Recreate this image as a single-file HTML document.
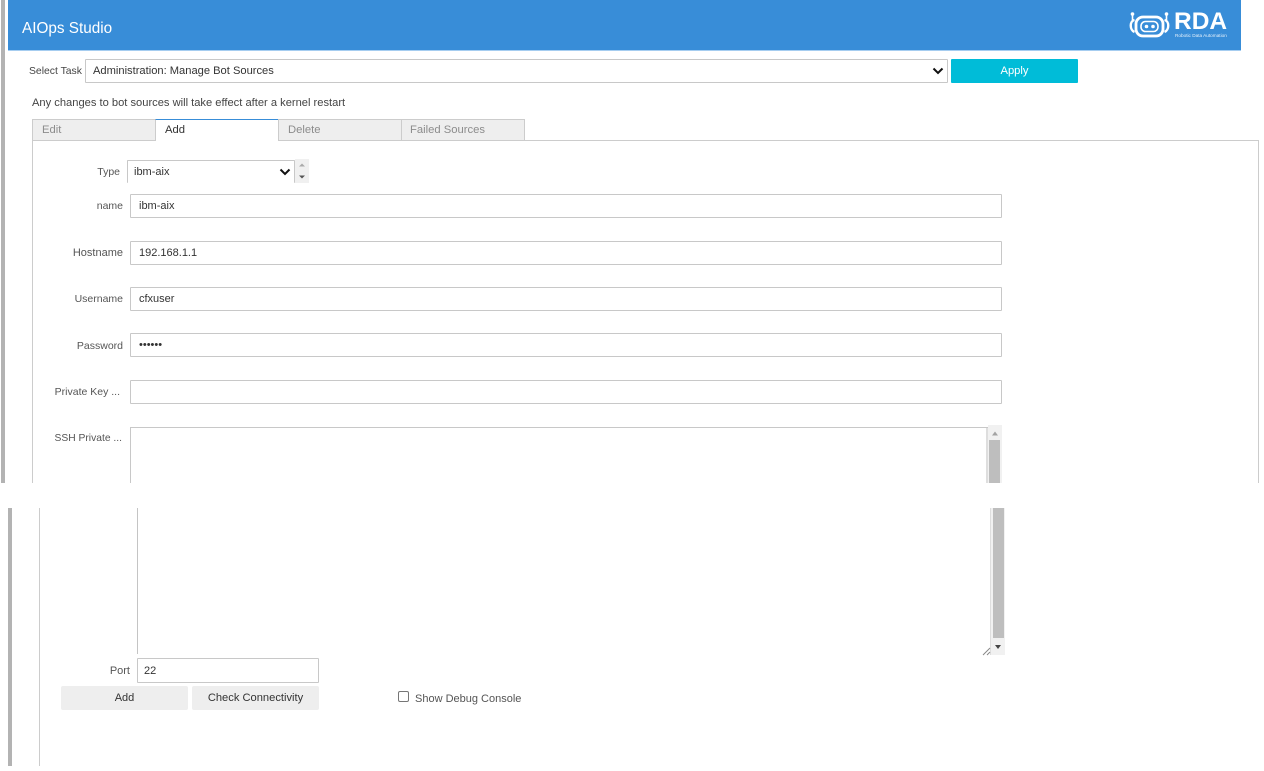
<!DOCTYPE html>
<html lang="en"><head><meta charset="utf-8"><title>AIOps Studio</title>
<style>
html,body{margin:0;padding:0;background:#fff;}
body{width:1264px;height:771px;overflow:hidden;position:relative;font-family:"Liberation Sans",Arial,sans-serif;font-size:12px;color:#333;}
.a{position:absolute;box-sizing:border-box;}
.t{position:absolute;white-space:nowrap;line-height:16px;height:16px;}
.r{text-align:right;color:#555;font-size:10.500px;}
.i{position:absolute;box-sizing:border-box;border:1px solid #c8c8c8;background:#fff;border-radius:1px;color:#333;line-height:23px;padding-left:8px;white-space:nowrap;font-size:11px;}
.tab{position:absolute;box-sizing:border-box;top:119px;height:22px;background:#eee;border:1px solid #ccc;color:#8c8c8c;line-height:20px;padding-left:9px;font-size:11.250px;}
</style></head><body>
<div class="a" style="left:1px;top:0;width:4px;height:483px;background:#b3b3b3"></div>
<div class="a" style="left:8px;top:508px;width:4px;height:258px;background:#b3b3b3"></div>
<div class="a" style="left:8px;top:0;width:1233px;height:50px;background:#388dd8"></div>
<div class="a" style="left:8px;top:50px;width:1233px;height:1px;background:#a6cdf0"></div>
<div class="t" style="left:22px;top:20px;font-size:15.300px;line-height:18px;height:18px;color:#fff;">AIOps Studio</div>
<svg class="a" style="left:1129px;top:11px" width="42" height="30" viewBox="0 0 42 30" fill="none" stroke="#fff">
<rect x="7" y="6" width="27" height="19" rx="7" stroke-width="2.800"/>
<rect x="12" y="10.500" width="17" height="10" rx="4.500" stroke-width="1.600"/>
<circle cx="17.500" cy="15.500" r="1.800" fill="#fff" stroke="none"/><circle cx="24" cy="15.500" r="1.800" fill="#fff" stroke="none"/>
<path d="M5.500 9C0.500 10 0.500 19 5.500 21M35.500 9C40.500 10 40.500 19 35.500 21" stroke-width="2.400"/>
<path d="M3.500 9V4M37.500 9V4" stroke-width="1.600"/><circle cx="3.500" cy="3" r="1.800" fill="#fff" stroke="none"/><circle cx="37.500" cy="3" r="1.800" fill="#fff" stroke="none"/>
</svg>
<div class="t" style="left:1174px;top:9px;font-size:24.500px;line-height:26px;height:26px;font-weight:bold;color:#fff;">RDA</div>
<div class="t" style="left:1175px;top:32px;font-size:4.700px;line-height:7px;height:7px;color:#e6f1fb;">Robotic Data Automation</div>

<div class="t" style="left:29px;top:64px;font-size:10.400px;color:#444;">Select Task</div>
<div class="i" style="left:85px;top:59px;width:863px;height:24px;padding-left:7px;font-size:11.150px;">Administration: Manage Bot Sources</div>
<svg class="a" style="left:932px;top:67px" width="12" height="8" viewBox="0 0 12 8"><path d="M1.500 1.500L6 6L10.500 1.500" fill="none" stroke="#111" stroke-width="2"/></svg>
<div class="a" style="left:951px;top:59px;width:127px;height:24px;background:#00bcd8;border-radius:1px;color:#fff;text-align:center;line-height:25px;font-size:11.200px;">Apply</div>
<div class="t" style="left:32px;top:95px;font-size:11.150px;color:#444;">Any changes to bot sources will take effect after a kernel restart</div>

<div class="a" style="left:32px;top:140px;width:1226px;height:1px;background:#ccc"></div>
<div class="a" style="left:1258px;top:140px;width:1px;height:343px;background:#ccc"></div>
<div class="a" style="left:32px;top:140px;width:1px;height:343px;background:#ccc"></div>
<div class="a" style="left:39px;top:508px;width:1px;height:258px;background:#ccc"></div>
<div class="tab" style="left:32px;width:124px;">Edit</div>
<div class="tab" style="left:155px;width:124px;height:22px;background:#fff;border:0;border-top:1px solid #388dd8;border-right:1px solid #ccc;border-left:1px solid #ccc;color:#333;padding-left:9px;">Add</div>
<div class="tab" style="left:278px;width:124px;">Delete</div>
<div class="tab" style="left:401px;width:124px;padding-left:8px;">Failed Sources</div>

<div class="t r" style="left:60px;top:164px;width:60px;">Type</div>
<div class="i" style="left:127px;top:160px;width:168px;height:23px;padding-left:6px;border-bottom:0;">ibm-aix</div>
<svg class="a" style="left:279px;top:168px" width="12" height="8" viewBox="0 0 12 8"><path d="M1.500 1.500L6 6L10.500 1.500" fill="none" stroke="#111" stroke-width="2"/></svg>
<div class="a" style="left:295px;top:159px;width:14px;height:24px;background:#f0f0f0"></div>
<svg class="a" style="left:295px;top:159px" width="14" height="24"><path d="M4 7.500H10L7 4.500Z" fill="#aaa"/><path d="M4 16.500H10L7 19.500Z" fill="#555"/></svg>

<div class="t r" style="left:40px;top:198px;width:83px;">name</div>
<div class="i" style="left:130px;top:194px;width:872px;height:24px;">ibm-aix</div>
<div class="t r" style="left:40px;top:245px;width:83px;font-size:11px;">Hostname</div>
<div class="i" style="left:130px;top:241px;width:872px;height:24px;">192.168.1.1</div>
<div class="t r" style="left:40px;top:291px;width:83px;">Username</div>
<div class="i" style="left:130px;top:287px;width:872px;height:24px;">cfxuser</div>
<div class="t r" style="left:40px;top:338px;width:83px;">Password</div>
<div class="i" style="left:130px;top:333px;width:872px;height:24px;font-size:11px;">••••••</div>
<div class="t r" style="left:40px;top:384px;width:80px;">Private Key ...</div>
<div class="i" style="left:130px;top:380px;width:872px;height:24px;"></div>
<div class="t r" style="left:40px;top:431px;width:82px;font-size:10.300px;">SSH Private ...</div>

<div class="a" style="left:130px;top:427px;width:858px;height:56px;border:1px solid #c8c8c8;border-bottom:0;border-right:0;"></div>
<div class="a" style="left:986px;top:428px;width:2px;height:55px;background:#dedede"></div>
<div class="a" style="left:988px;top:425px;width:14px;height:58px;background:#f1f1f1"></div>
<div class="a" style="left:989px;top:440px;width:11px;height:43px;background:#bebebe"></div>
<svg class="a" style="left:988px;top:428px" width="14" height="10"><path d="M4 7.500H10L7 3.500Z" fill="#a3a3a3"/></svg>

<div class="a" style="left:137px;top:508px;width:1px;height:146px;background:#c4c4c4"></div>
<div class="a" style="left:990px;top:508px;width:1px;height:147px;background:#dedede"></div>
<div class="a" style="left:991px;top:508px;width:14px;height:147px;background:#f1f1f1"></div>
<div class="a" style="left:993px;top:508px;width:11px;height:130px;background:#bebebe"></div>
<svg class="a" style="left:991px;top:642px" width="14" height="10"><path d="M4 3H10L7 7Z" fill="#444"/></svg>
<svg class="a" style="left:982px;top:647px" width="9" height="9"><path d="M1 8L8 1M5 8L8 5" stroke="#888" stroke-width="1" fill="none"/></svg>

<div class="t r" style="left:80px;top:663px;width:50px;font-size:11px;">Port</div>
<div class="i" style="left:137px;top:658px;width:182px;height:25px;padding-left:6px;line-height:24px;">22</div>
<div class="a" style="left:61px;top:686px;width:127px;height:24px;background:#eee;border-radius:2px;text-align:center;line-height:24px;font-size:11px;color:#333;">Add</div>
<div class="a" style="left:192px;top:686px;width:127px;height:24px;background:#eee;border-radius:2px;text-align:center;line-height:24px;font-size:11.150px;color:#333;">Check Connectivity</div>
<div class="a" style="left:398px;top:691px;width:11px;height:11px;border:1px solid #767676;border-radius:2px;background:#fff"></div>
<div class="t" style="left:415px;top:691px;font-size:11px;color:#555;">Show Debug Console</div>
</body></html>
